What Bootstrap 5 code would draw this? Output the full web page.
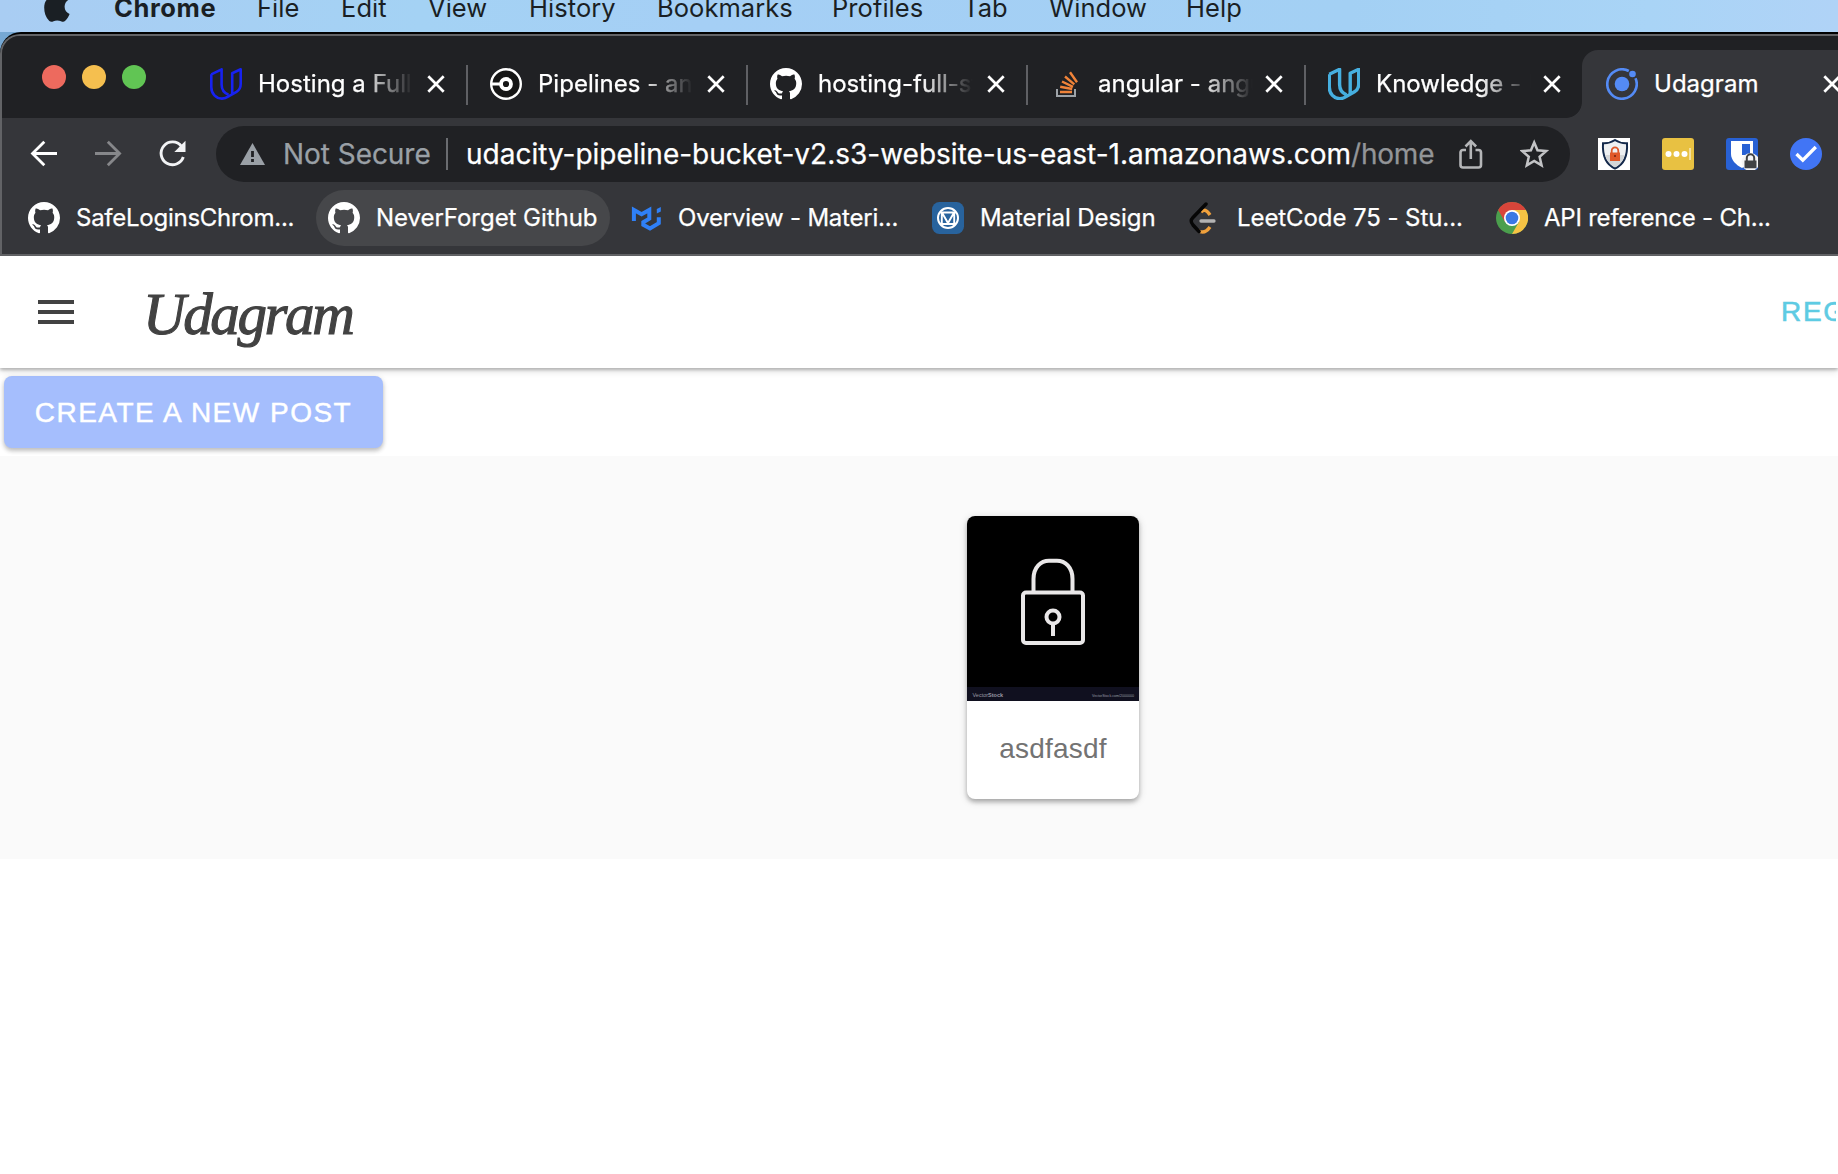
<!DOCTYPE html>
<html lang="en">
<head>
<meta charset="utf-8">
<title>Udagram</title>
<link href="https://cdn.jsdelivr.net/npm/bootstrap@5.3.0/dist/css/bootstrap.min.css" rel="stylesheet">
<style>
body{font-family:Inter,"Liberation Sans",sans-serif;background:#fff;overflow:hidden;width:1838px;height:1174px}
svg{display:block;flex:none}
.desktop{background:linear-gradient(90deg,#a9cdf3 0,#a4d2f4 420px,#a5cff5 700px,#a3d0f4 1350px,#a9d4f6 1650px,#b0d3f7 1838px)}
.menubar{height:32px;font-size:25.5px;line-height:16px;color:#1a1f24;letter-spacing:.05px;padding-left:44px}
.menubar span{flex:none;white-space:nowrap}
.menubar .app-name{letter-spacing:.6px;width:143px}
.apple-slot{width:70px}
.w84{width:84px}.w91{width:87px}.w97{width:101px}.w128{width:128px}.w176{width:175px}.w134{width:131px}.w85{width:86px}.w135{width:137px}
.win-back{background:#76a8d4}
.win-edge{background:#000;border-top-left-radius:21px;padding-top:2px;height:224px}
.win{background:#35363a;border:solid #626366;border-width:2px 0 2px 2px;border-top-left-radius:20px;height:222px;overflow:hidden;color:#fff;-webkit-text-stroke:.25px currentColor}
.strip{height:82px;background:#202124}
.lights{width:186px;padding:29px 0 0 40px;gap:16px;flex:none}
.light{width:24px;height:24px;border-radius:50%}
.light.r{background:#ed6a5e}.light.y{background:#f5bf4f}.light.g{background:#61c554}
.tab-item{width:280px;height:40px;margin-top:29px;padding-left:22px;border-right:2px solid #5f6064;flex:none}
.tab-item svg{margin-top:-2px}
.tab-item.t4{width:278px}
.tab-item.t5{width:276px;border:0}
.tab-name{font-size:24px;line-height:36px;letter-spacing:.02px;margin-left:16px;width:155px;overflow:hidden;white-space:nowrap;flex:none;padding-bottom:2px;
 -webkit-mask-image:linear-gradient(90deg,#000 103px,transparent 155px);mask-image:linear-gradient(90deg,#000 103px,transparent 155px)}
.tab-x{margin-left:14px}
.t4 .tab-x,.t5 .tab-x{margin-left:12px}
.tab-live{margin-top:14px;width:230px;height:68px;background:#35363a;border-top-left-radius:16px;padding-left:24px;flex:1 1 auto;overflow:hidden}
.tab-live .tab-name{-webkit-mask-image:none;mask-image:none;padding-bottom:1px}
.curve{width:16px;height:16px;margin-left:-16px;margin-top:66px;flex:none;background:radial-gradient(circle at 0 0,#202124 15.5px,#35363a 16.3px)}
.toolbar{height:72px;padding-left:24px}
.nav-ic{width:64px;flex:none}
.omni{width:1354px;height:56px;border-radius:28px;background:#202124;font-size:28px;line-height:40px;margin-left:-2px;padding-left:24px;white-space:nowrap;flex:none}
.omni span{flex:none}
.insecure{color:#9aa0a6;margin-left:18px;width:163px;letter-spacing:-.05px}
.bar{width:2px;height:32px;background:#6a6c70;flex:none}
.host{margin-left:18px;width:885px}
.route{color:#939598;width:105px;letter-spacing:-.2px}
.exts{gap:32px;padding-left:28px}
.marks{height:56px;font-size:24px;line-height:34px;white-space:nowrap}
.marks .bm{height:56px;flex:none}
.marks .bm span{margin-left:16px;padding-bottom:1px}
.bm.b1{width:314px;padding-left:26px}
.bm.b2{width:294px;padding-left:12px;border-radius:28px;background:#46474a}
.bm.b3{width:322px;padding-left:20px}
.bm.b4{width:250px}
.bm.b5{width:314px;padding-left:7px}
.b1 span{letter-spacing:-.26px}.b2 span{letter-spacing:-.04px}.b3 span,.b6 span{letter-spacing:-.22px}.b4 span,.b5 span{letter-spacing:-.08px}
.page{font-family:"Liberation Sans",Arial,sans-serif}
.app-head{height:112px;background:#fff;box-shadow:0 2px 3px rgba(0,0,0,.24),0 4px 7px rgba(0,0,0,.1);z-index:1;padding-left:38px}
.brand{font:italic 400 59px/70px "Liberation Serif",serif;color:#424242;letter-spacing:-2.4px;margin:3px 0 0 69px;-webkit-text-stroke:1.1px #424242;width:1567px;flex:none}
.reg{color:#5ecbe3;font-size:28px;letter-spacing:1.68px;white-space:nowrap;-webkit-text-stroke:.55px #5ecbe3;padding-left:71px;width:126px;overflow:hidden;flex:none}
.actions{height:88px;padding:8px 4px}
.btn-post{width:379px;height:72px;border:0;border-radius:8px;background:#a5befd;color:#fff;font-size:28px;letter-spacing:1.5px;padding:1px 0 0;line-height:1;-webkit-text-stroke:.45px #fff;box-shadow:0 3px 4px rgba(0,0,0,.2),0 1px 6px rgba(0,0,0,.1);white-space:nowrap}
.btn-post:disabled{background:#a5befd;color:#fff;opacity:1}
.feed{height:403px;background:#fafafa;padding:60px 0 0 967px}
.post{width:172px;height:283px;border:0;border-radius:8px;overflow:hidden;box-shadow:0 3px 4px rgba(0,0,0,.24),0 2px 8px rgba(0,0,0,.16)}
.post p{font-size:28px;line-height:34px;letter-spacing:.2px;color:#737373;margin:31px 0 0}
</style>
<script src="https://cdn.jsdelivr.net/npm/bootstrap@5.3.0/dist/js/bootstrap.bundle.min.js"></script>
</head>
<body>
<svg width="0" height="0" class="position-absolute">
 <symbol id="octo" viewBox="0 0 16 16"><path fill="#fff" d="M8 0C3.58 0 0 3.58 0 8c0 3.54 2.29 6.53 5.47 7.59.4.07.55-.17.55-.38 0-.19-.01-.82-.01-1.49-2.01.37-2.53-.49-2.69-.94-.09-.23-.48-.94-.82-1.13-.28-.15-.68-.52-.01-.53.63-.01 1.08.58 1.23.82.72 1.21 1.87.87 2.33.66.07-.52.28-.87.51-1.07-1.78-.2-3.64-.89-3.64-3.95 0-.87.31-1.59.82-2.15-.08-.2-.36-1.02.08-2.12 0 0 .67-.21 2.2.82.64-.18 1.32-.27 2-.27s1.36.09 2 .27c1.53-1.04 2.2-.82 2.2-.82.44 1.1.16 1.92.08 2.12.51.56.82 1.27.82 2.15 0 3.07-1.87 3.75-3.65 3.95.29.25.54.73.54 1.48 0 1.07-.01 1.93-.01 2.2 0 .21.15.46.55.38A8.01 8.01 0 0 0 16 8c0-4.42-3.58-8-8-8z"/></symbol>
 <symbol id="udacity" viewBox="0 0 32 32"><path fill="none" stroke="currentColor" stroke-linejoin="round" d="M1.300 6.300 L11.600 1.300 V16.500 C11.600 21.500 14 25 18.500 26.800 M1.300 6.300 V19 C1.300 26 6 30.600 12 30.600 C14.500 30.600 16.500 29.800 18.500 28.400 L26.500 23.800 C29.500 22 30.700 19.500 30.700 16 V1.300 L22.200 5.200 V25.800"/></symbol>
 <symbol id="close" viewBox="0 0 18 18"><path stroke="#fff" stroke-width="2.700" d="M1.300 1.300 16.700 16.700M16.700 1.300 1.300 16.700"/></symbol>
</svg>
<div class="desktop">
 <nav class="menubar d-flex">
  <div class="apple-slot"><svg width="26" height="22" viewBox="0 0 26 22"><path fill="#1a1f24" d="M24.200 0C22 1.600 20.600 3.800 20.600 6.800 20.600 10.200 22.600 12.800 25.600 14 24.800 16.400 23 19.200 21 21.100 19.700 22.100 18.300 21.800 17 21.200 15 20.300 11.500 20.200 9.500 21.200 8 22 6.600 22 5.300 21 1.600 17.400.2 12.500.2 7.600.2 4.600 1 1.800 2.500 0Z"/></svg></div>
  <span class="app-name fw-bold">Chrome</span><span class="w84">File</span><span class="w91">Edit</span><span class="w97">View</span><span class="w128">History</span><span class="w176">Bookmarks</span><span class="w134">Profiles</span><span class="w85">Tab</span><span class="w135">Window</span><span>Help</span>
 </nav>
 <div class="win-back"><div class="win-edge"><div class="win">
  <div class="strip d-flex align-items-start">
   <div class="lights d-flex"><i class="light r"></i><i class="light y"></i><i class="light g"></i></div>
   <div class="tab-item d-flex align-items-center"><svg width="32" height="32" color="#1722f0" stroke-width="2.600"><use href="#udacity"/></svg><span class="tab-name">Hosting a Full Stack</span><svg class="tab-x" width="18" height="18"><use href="#close"/></svg></div>
   <div class="tab-item d-flex align-items-center"><svg width="32" height="32" viewBox="0 0 32 32"><circle cx="16" cy="16" r="14.800" fill="#161616" stroke="#fff" stroke-width="2.400"/><path d="M2 16h9" stroke="#fff" stroke-width="3"/><circle cx="16" cy="16" r="5" fill="#161616" stroke="#fff" stroke-width="3.800"/></svg><span class="tab-name">Pipelines - angular</span><svg class="tab-x" width="18" height="18"><use href="#close"/></svg></div>
   <div class="tab-item d-flex align-items-center"><svg width="32" height="32"><use href="#octo"/></svg><span class="tab-name">hosting-full-stack</span><svg class="tab-x" width="18" height="18"><use href="#close"/></svg></div>
   <div class="tab-item t4 d-flex align-items-center"><svg width="32" height="32" viewBox="0 0 32 32"><path d="M7 21v7h18v-7" fill="none" stroke="#9ea3a8" stroke-width="2"/><g stroke="#f08339" stroke-width="2.400"><path d="M10 24h12M10.200 18.800l12 2.200M12 13.500l11 5.300M15 8.500l9.300 7.800M20 4.200l7 10"/></g></svg><span class="tab-name">angular - angular</span><svg class="tab-x" width="18" height="18"><use href="#close"/></svg></div>
   <div class="tab-item t5 d-flex align-items-center"><svg width="32" height="32" color="#46afe0" stroke-width="3.400"><use href="#udacity"/></svg><span class="tab-name">Knowledge - Udacity</span><svg class="tab-x" width="18" height="18"><use href="#close"/></svg></div>
   <div class="curve"></div>
   <div class="tab-live d-flex align-items-center"><svg width="32" height="32" viewBox="0 0 32 32"><circle cx="16" cy="16" r="7.300" fill="#548bf5"/><circle cx="26.500" cy="6" r="3.300" fill="#548bf5"/><path d="M22.800 3A14.700 14.700 0 1 0 29.500 10.200" fill="none" stroke="#548bf5" stroke-width="2.600"/></svg><span class="tab-name">Udagram</span><svg class="tab-x" width="18" height="18"><use href="#close"/></svg></div>
  </div>
  <div class="toolbar d-flex align-items-center">
   <div class="nav-ic"><svg width="38" height="32" viewBox="0 0 38 32"><path d="M31 15.500H7M18.300 3.800 6.500 15.500 18.300 27.300" fill="none" stroke="#fff" stroke-width="2.800"/></svg></div>
   <div class="nav-ic"><svg width="38" height="32" viewBox="0 0 38 32"><path d="M5 15.500h24M17.800 3.800l11.800 11.700-11.800 11.800" fill="none" stroke="#86878a" stroke-width="2.800"/></svg></div>
   <div class="nav-ic"><svg width="38" height="32" viewBox="0 0 38 32"><path d="M27.500 8.300A11.400 11.400 0 1 0 29.300 19" fill="none" stroke="#f2f3f5" stroke-width="2.900"/><path d="M31.500 2.800V14H20.300Z" fill="#f2f3f5"/></svg></div>
   <div class="omni d-flex align-items-center">
    <svg width="25" height="22" viewBox="0 0 25 22"><path fill="#9aa0a6" d="M12.500 0 25 22H0z"/><path stroke="#202124" stroke-width="2.800" d="M12.500 8v6M12.500 16v3"/></svg>
    <span class="insecure">Not Secure</span><i class="bar"></i><span class="host">udacity-pipeline-bucket-v2.s3-website-us-east-1.amazonaws.com</span><span class="route">/home</span>
    <svg width="30" height="32" viewBox="0 0 30 32"><path d="M10 12H7a2.500 2.500 0 0 0-2.500 2.500V27A2.500 2.500 0 0 0 7 29.500h15.500A2.500 2.500 0 0 0 25 27V14.500a2.500 2.500 0 0 0-2.500-2.500h-3M14.800 21V4M9.500 8.500l5.300-5.300 5.300 5.300" fill="none" stroke="#b5b6b8" stroke-width="2.600"/></svg>
    <svg class="ms-auto me-3" width="34" height="32" viewBox="0 0 34 32"><path d="M14 4 L17.300 11.800 26 12.600 19.400 18.300 21.400 26.900 14 22.400 6.600 26.900 8.600 18.300 2 12.600 10.700 11.800Z" transform="translate(.2 .5)" fill="none" stroke="#c3c4c6" stroke-width="2.500"/></svg>
   </div>
   <div class="exts d-flex">
    <svg width="32" height="32" viewBox="0 0 32 32"><path fill="#fff" d="M0 0h32v32H0z"/><path d="M17 2C13.500 4.300 9 5.500 5 5.300 4.300 17 7 26 17 30.500 27 26 29.700 17 29 5.300 25 5.500 20.500 4.300 17 2Z" fill="#eef0f2" stroke="#14294b" stroke-width="2"/><path fill="#d4d6d8" d="M7 17c2 6 5 10 10 12.500C22 27 25 23 26.500 17z"/><path fill="#e0592a" d="M12 14.500h10V23H12z"/><path d="M13.700 15v-2.300a3.300 3.300 0 0 1 6.600 0V15" fill="none" stroke="#e0592a" stroke-width="1.800"/><circle cx="17" cy="18" r="1" fill="#6f2010"/></svg>
    <svg width="32" height="32" viewBox="0 0 32 32"><rect width="32" height="32" rx="3" fill="#e8c142"/><g fill="#fff"><circle cx="6.500" cy="16" r="3"/><circle cx="14.500" cy="16" r="3"/><circle cx="22.500" cy="16" r="3"/></g><path d="M28 10v12" stroke="#f6e6b0" stroke-width="1.700"/></svg>
    <svg width="32" height="32" viewBox="0 0 32 32"><rect width="32" height="32" rx="3" fill="#2861d4"/><path fill="#fff" d="M5 3h22v14c0 6-5 10-11 13C10 27 5 22 5 16z"/><path fill="#2861d4" d="M16 6h8v11h-8z"/><circle cx="24.500" cy="24" r="9" fill="#f5f5f5"/><path d="M20.800 23v-3a3.700 3.700 0 0 1 7.400 0v3" fill="none" stroke="#404244" stroke-width="2"/><path fill="#404244" d="M18.500 22.500h12v7.800h-12z"/></svg>
    <svg width="32" height="32" viewBox="0 0 32 32"><circle cx="16" cy="16" r="16" fill="#4175f5"/><path d="m6.500 16 6.300 6.200L25.800 9" fill="none" stroke="#fff" stroke-width="3.300"/></svg>
   </div>
  </div>
  <div class="marks d-flex">
   <div class="bm b1 d-flex align-items-center"><svg width="32" height="32"><use href="#octo"/></svg><span>SafeLoginsChrom...</span></div>
   <div class="bm b2 d-flex align-items-center"><svg width="32" height="32"><use href="#octo"/></svg><span>NeverForget Github</span></div>
   <div class="bm b3 d-flex align-items-center"><svg width="32" height="32" viewBox="0 0 32 32"><g fill="none" stroke="#2f80f7" stroke-width="4"><path d="M3.900 19V8L11.600 12.300 19.300 8V16.600L13.300 20.200V22.800L20 26.400 28.800 21.200V15.200"/></g><path fill="#2f80f7" d="M26.800 7 30.800 4.900V9.500L26.800 11.600z"/></svg><span>Overview - Materi...</span></div>
   <div class="bm b4 d-flex align-items-center"><svg width="32" height="32" viewBox="0 0 32 32"><rect width="32" height="32" rx="7.500" fill="#28639d"/><g fill="none" stroke="#fff" stroke-width="2"><circle cx="16" cy="16" r="10"/><path d="M8.500 10.500h15M9.800 10.500V22h12.400V10.500M10.500 11.500 16 21l5.500-9.500" stroke-width="1.900"/></g></svg><span>Material Design</span></div>
   <div class="bm b5 d-flex align-items-center"><svg width="32" height="32" viewBox="0 0 32 32"><path d="M12 10.200C15 7 17.500 7.500 21 13M21 25C17.500 30 13.500 31.500 9 28.500" fill="none" stroke="#f0a13c" stroke-width="3.300"/><path d="M17 2 4 15.500C1.500 18 1.500 20 4 23l6 6.500" fill="none" stroke="#060606" stroke-width="3.500" stroke-linecap="round"/><path d="M12 19h13" stroke="#b3b3b3" stroke-width="3.300" stroke-linecap="round"/></svg><span>LeetCode 75 - Stu...</span></div>
   <div class="bm b6 d-flex align-items-center"><svg width="32" height="32" viewBox="0 0 32 32"><circle cx="16" cy="16" r="16" fill="#4b9f4d"/><path fill="#f5c344" d="M16 8h13.860A16 16 0 0 1 16 32L22.930 20z"/><path fill="#d8453a" d="M16 8h13.860A16 16 0 0 0 2.140 8L9.070 20 16 8z"/><circle cx="16" cy="16" r="8" fill="#fff"/><circle cx="16" cy="16" r="6.300" fill="#3a78e4"/></svg><span>API reference - Ch...</span></div>
  </div>
 </div></div></div>
</div>
<main class="page">
 <header class="app-head position-relative d-flex align-items-center">
  <svg width="36" height="24" viewBox="0 0 36 24"><path fill="#424242" d="M0 0h36v4H0zM0 10h36v4H0zM0 20h36v4H0z"/></svg>
  <div class="brand">Udagram</div>
  <a class="reg text-decoration-none">REGISTER</a>
 </header>
 <div class="actions"><button class="btn btn-primary btn-post" disabled>CREATE A NEW POST</button></div>
 <section class="feed">
  <article class="card post">
   <svg width="172" height="185" viewBox="0 0 172 185"><path d="M0 0h172v185H0z"/><path fill="#10101f" d="M0 171h172v14H0z"/><g fill="none" stroke="#e9e7e8" stroke-width="4"><rect x="56" y="76.500" width="60" height="50.500" rx="3"/><path d="M66.500 76V63C66.500 51 74 44.700 82 44.700h8C98 44.700 105.500 51 105.500 63v13"/><circle cx="86" cy="101" r="6.500"/><path d="M86 108v12"/></g><g fill="#9a9aa5" font-family="Liberation Sans" font-size="5.500"><text x="5.500" y="180.500">Vector<tspan font-weight="700">Stock</tspan></text><text x="125" y="181" font-size="3.600" textLength="42">VectorStock.com/2000000</text></g></svg>
   <p class="text-center">asdfasdf</p>
  </article>
 </section>
</main>
</body>
</html>
